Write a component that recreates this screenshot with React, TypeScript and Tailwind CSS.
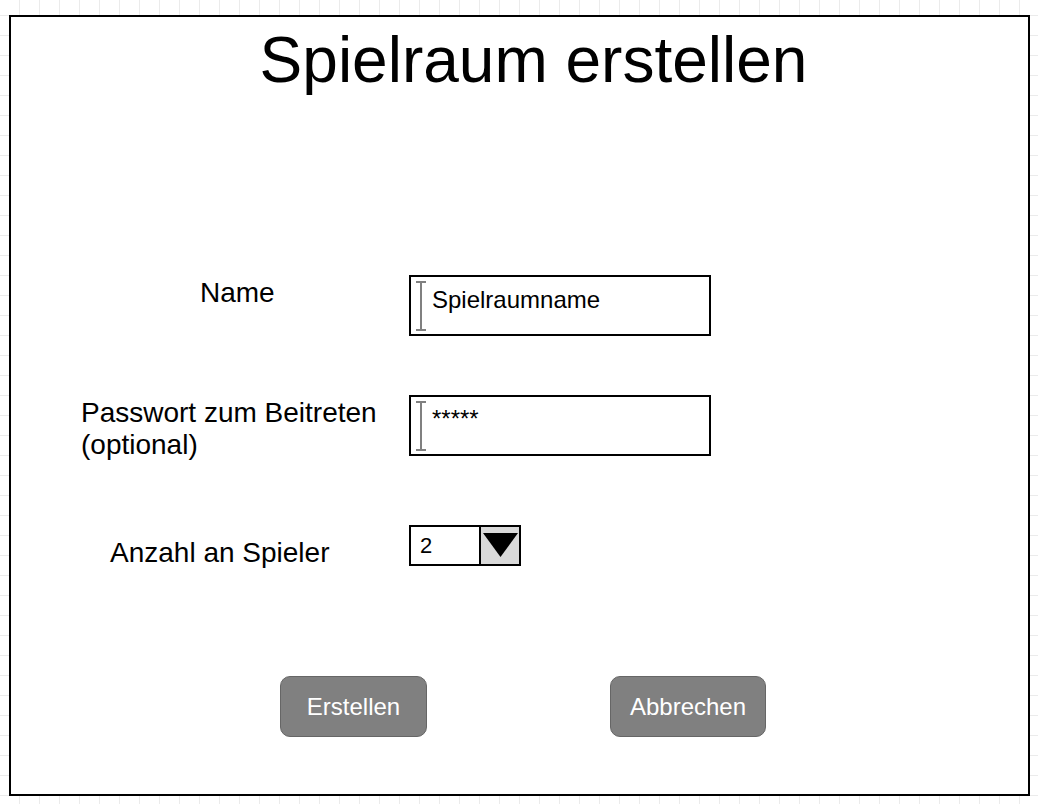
import React from 'react';

function Cursor() {
  return (
    <svg width="10" height="50" viewBox="0 0 10 50" className="shrink-0">
      <path d="M5 1 V49 M0 1 H10 M0 49 H10" stroke="#808080" strokeWidth={2} fill="none" />
    </svg>
  );
}

function TextBox({ value, textOffset }: { value: string; textOffset: string }) {
  return (
    <div className="w-[302px] h-[61px] border-2 border-black bg-white flex items-start pl-[5px] pt-[4px]">
      <Cursor />
      <span className={`ml-[6px] text-[24px] leading-[28px] text-black ${textOffset}`}>{value}</span>
    </div>
  );
}

export default function App() {
  return (
    <div
      className="w-[1038px] h-[804px] overflow-hidden bg-white pl-[9px] pt-[15px] bg-[linear-gradient(to_right,#ebebeb_1px,transparent_1px),linear-gradient(to_bottom,#ebebeb_1px,transparent_1px)] bg-[size:20px_20px] bg-[position:19px_15px]"
      style={{ fontFamily: '"Liberation Sans", Arial, sans-serif' }}
    >
      <div className="w-[1021px] h-[781px] border-2 border-black bg-white flex flex-col">
        <h1 className="pt-[8px] pl-[28px] text-center text-[64px] leading-[70px] font-normal text-black">
          Spielraum erstellen
        </h1>

        <div className="mt-[180px] h-[61px] flex items-start">
          <div className="w-[398px] pl-[189px] pt-[2px] text-[28px] leading-[31px] text-black">Name</div>
          <TextBox value="Spielraumname" textOffset="mt-[5px]" />
        </div>

        <div className="mt-[59px] h-[61px] flex items-start">
          <div className="w-[398px] pl-[70px] pt-[2px] text-[28px] leading-[32px] text-black">
            Passwort zum Beitreten
            <br />
            (optional)
          </div>
          <TextBox value="*****" textOffset="mt-[4px]" />
        </div>

        <div className="mt-[69px] h-[41px] flex items-start">
          <div className="w-[398px] pl-[99px] pt-[12px] text-[28px] leading-[31px] text-black">Anzahl an Spieler</div>
          <div className="w-[112px] h-[41px] border-2 border-black bg-white flex">
            <div className="w-[68px] flex items-center pl-[9px] text-[22px] text-black">2</div>
            <div className="flex-1 border-l-2 border-black bg-[#d9d9d9] flex items-start pl-[2px] pt-[6px]">
              <svg width="35" height="24" viewBox="0 0 35 24">
                <polygon points="0,0 35,0 17.5,24" fill="#000" />
              </svg>
            </div>
          </div>
        </div>

        <div className="mt-[110px] flex items-start pl-[269px] gap-[183px]">
          <button className="w-[147px] h-[61px] rounded-[10px] border border-[#666666] bg-[#808080] text-white text-[24px]">
            Erstellen
          </button>
          <button className="w-[156px] h-[61px] rounded-[10px] border border-[#666666] bg-[#808080] text-white text-[24px]">
            Abbrechen
          </button>
        </div>
      </div>
    </div>
  );
}
